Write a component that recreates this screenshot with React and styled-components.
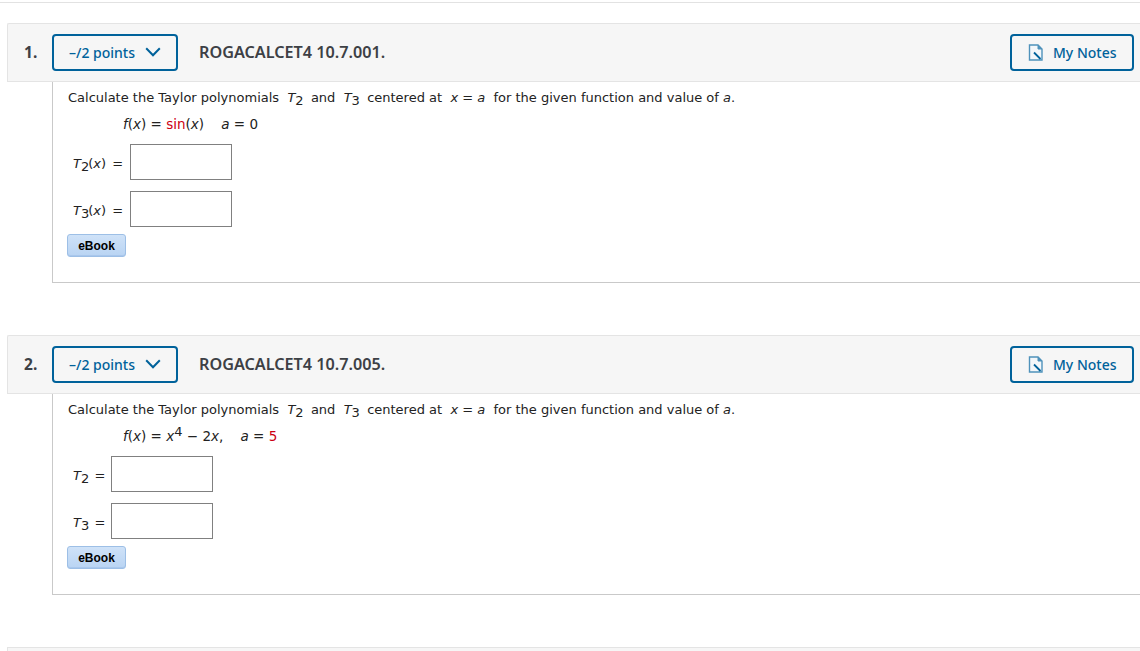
import React from "react";
import styled, { createGlobalStyle } from "styled-components";

const Global = createGlobalStyle`
  html, body { margin: 0; padding: 0; background: #fff; overflow: hidden; }
  #root { width: 1140px; height: 651px; overflow: hidden; }
`;
const Page = styled.div`
  width: 1140px;
  height: 651px;
  overflow: hidden;
  padding-top: 2px;
  box-sizing: border-box;
  display: flex;
  flex-direction: column;
`;
const TopRule = styled.div`
  height: 1px;
  flex: none;
  background: #e2e2e2;
  margin-bottom: 20px;
`;
const Question = styled.section`
  margin-left: 7px;
  margin-bottom: 52px;
  flex: none;
`;
const Header = styled.header`
  height: 59px;
  box-sizing: border-box;
  background: #f6f6f6;
  border: 1px solid #e4e4e4;
  border-right: 0;
  border-radius: 2px 0 0 0;
  display: flex;
  align-items: center;
  padding: 0 6px 0 16px;
  font-family: "Noto Sans", "Open Sans", sans-serif;
`;
const Num = styled.div`
  width: 28px;
  font-size: 15.5px;
  font-weight: 700;
  color: #3d4045;
  margin-top: -2px;
`;
const Outlined = styled.button`
  height: 37px;
  box-sizing: border-box;
  background: transparent;
  border: 2px solid #00629b;
  border-radius: 4px;
  color: #00629b;
  font-family: inherit;
  font-size: 14px;
  font-weight: 500;
  display: flex;
  align-items: center;
  padding: 0;
  margin-top: -1px;
`;
const Points = styled(Outlined)`
  width: 126px;
  padding-left: 15px;
  gap: 10px;
`;
const Title = styled.h2`
  margin: -1px 0 0 21px;
  font-size: 16.2px;
  font-weight: 600;
  color: #3d4045;
  flex: 1;
`;
const Notes = styled(Outlined)`
  width: 124px;
  padding-left: 16px;
  gap: 9px;
`;
const Body = styled.div`
  margin-left: 45px;
  height: 201px;
  box-sizing: border-box;
  border-left: 1px solid #c9c9c9;
  border-bottom: 1px solid #c9c9c9;
  padding: 8px 0 0 15px;
  font-family: "DejaVu Sans", Verdana, sans-serif;
  font-size: 13px;
  color: #222;
  display: flex;
  flex-direction: column;
  align-items: flex-start;
`;
const Text = styled.div`
  height: 16px;
  line-height: 16px;
  white-space: pre;
`;
const Formula = styled(Text)`
  margin: 10px 0 0 55px;
  font-size: 13.5px;
  height: 17px;
`;
const Row = styled.div`
  display: flex;
  align-items: center;
  height: 36px;
  margin-top: 11px;
  white-space: pre;
`;
const Label = styled.span`
  margin-left: 5px;
  width: ${(p) => p.$w}px;
  flex: none;
  padding-top: 3px;
`;
const Eq = styled.span`
  margin-left: -2px;
`;
const Input = styled.div`
  width: 102px;
  height: 36px;
  box-sizing: border-box;
  border: 1px solid #808080;
  background: #fff;
`;
const I = styled.i`
  font-style: italic;
`;
const Sub = styled.sub`
  font-size: 13px;
  line-height: 0;
  vertical-align: -3px;
  margin-right: -1px;
`;
const Sup = styled.sup`
  font-size: 13px;
  line-height: 0;
  vertical-align: 5px;
`;
const Red = styled.span`
  color: #cc0012;
`;
const EBook = styled.button`
  margin-top: 7px;
  margin-left: -1px;
  width: 59px;
  height: 23px;
  box-sizing: border-box;
  border: 1px solid #9dbfe6;
  border-radius: 3px;
  background: linear-gradient(#cfe2f8, #b9d4f3);
  box-shadow: inset 0 -1px 0 #a9c7ec;
  color: #000;
  font-family: "Liberation Sans", Arial, sans-serif;
  font-size: 12px;
  font-weight: 700;
  padding: 0;
`;
const NextHeader = styled.div`
  margin-left: 7px;
  height: 10px;
  background: #f6f6f6;
  border: 1px solid #e4e4e4;
  border-right: 0;
  flex: none;
`;

const Chevron = () => (
  <svg width="16" height="10" viewBox="0 0 16 10" fill="none">
    <path d="M1.2 1.2 8 8.2l6.8-7" stroke="#00629b" strokeWidth="2" />
  </svg>
);
const NoteIcon = () => (
  <svg width="16" height="17" viewBox="0 0 16 17" fill="none">
    <path d="M1.5 1H10l4 4v11H1.5z" fill="#f3f7fa" stroke="#4f92bb" strokeWidth="1.4" />
    <path d="M10 1v4h4z" fill="#4f92bb" stroke="#4f92bb" />
    <path d="M6 8.5 12.5 15" stroke="#00629b" strokeWidth="1.8" />
  </svg>
);

const Intro = () => (
  <Text>
    Calculate the Taylor polynomials  <I>T</I><Sub>2</Sub>  and  <I>T</I><Sub>3</Sub>  centered at  <I>x</I> = <I>a</I>  for the given function and value of <I>a</I>.
  </Text>
);

const Item = ({ n, code, formula, rows, labelW }) => (
  <Question>
    <Header>
      <Num>{n}.</Num>
      <Points>–/2 points <Chevron /></Points>
      <Title>ROGACALCET4 {code}.</Title>
      <Notes><NoteIcon /> My Notes</Notes>
    </Header>
    <Body>
      <Intro />
      <Formula>{formula}</Formula>
      {rows.map((r, i) => (
        <Row key={i}>
          <Label $w={labelW}>{r}</Label>
          <Input />
        </Row>
      ))}
      <EBook>eBook</EBook>
    </Body>
  </Question>
);

export default function App() {
  return (
    <Page>
      <Global />
      <TopRule />
      <Item
        n={1}
        code="10.7.001"
        labelW={57}
        formula={<><I>f</I>(<I>x</I>) = <Red>sin</Red>(<I>x</I>)    <I>a</I> = 0</>}
        rows={[
          <><I>T</I><Sub>2</Sub>(<I>x</I>)  <Eq>=</Eq> </>,
          <><I>T</I><Sub>3</Sub>(<I>x</I>)  <Eq>=</Eq> </>,
        ]}
      />
      <Item
        n={2}
        code="10.7.005"
        labelW={38}
        formula={<><I>f</I>(<I>x</I>) = <I>x</I><Sup>4</Sup> − 2<I>x</I>,    <I>a</I> = <Red>5</Red></>}
        rows={[
          <><I>T</I><Sub>2</Sub>  <Eq>=</Eq> </>,
          <><I>T</I><Sub>3</Sub>  <Eq>=</Eq> </>,
        ]}
      />
      <NextHeader />
    </Page>
  );
}
